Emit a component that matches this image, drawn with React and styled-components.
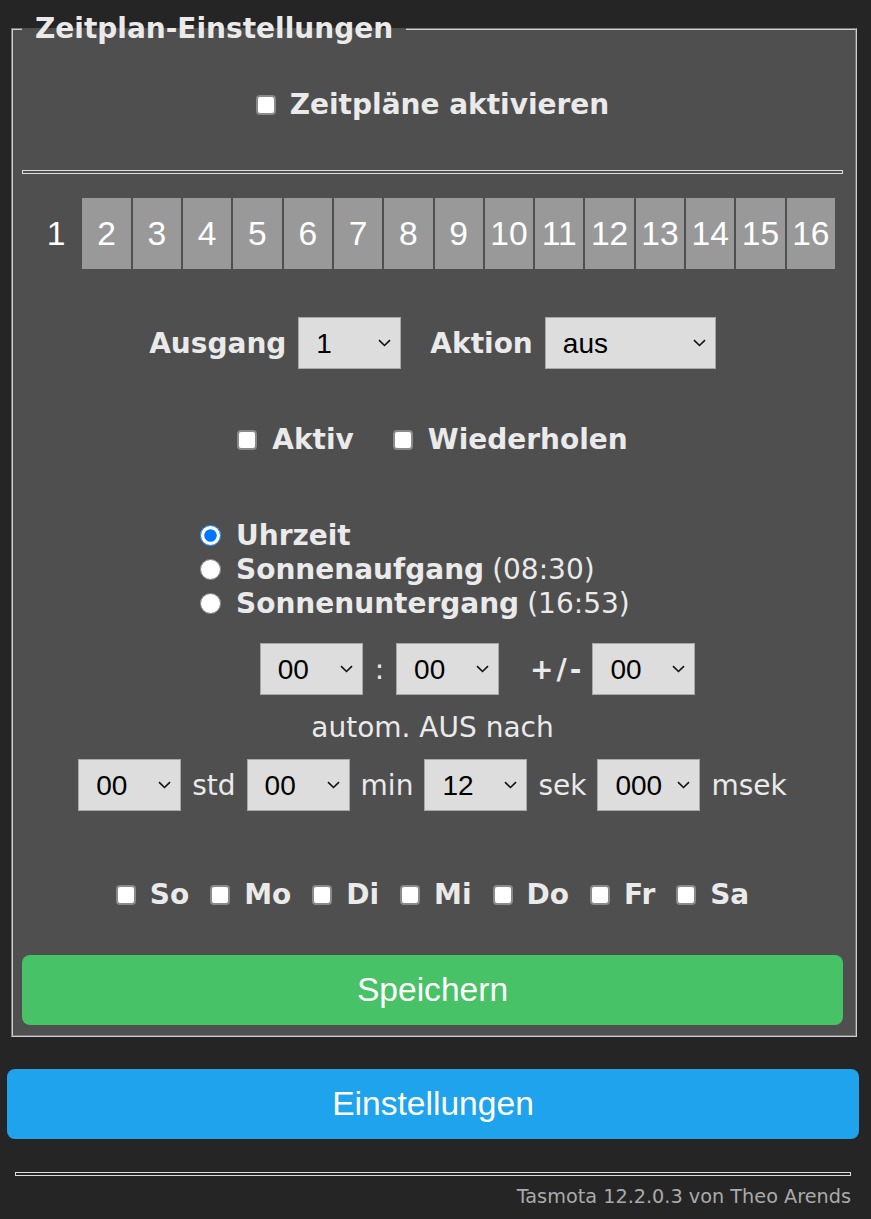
import styled, { createGlobalStyle } from 'styled-components';

const GlobalStyle = createGlobalStyle`
  body {
    margin: 0;
    background: #252525;
    color: #eaeaea;
    font-family: "DejaVu Sans", Verdana, sans-serif;
    font-size: 28px;
  }
`;

const Page = styled.div`
  padding: 0 12px 20px 7px;
`;

const Panel = styled.fieldset`
  margin: 12px 2px 0 4px;
  padding: 0 12px 10px 9px;
  background: #4f4f4f;
  border: 2px groove #cfcfcf;
  min-width: 0;
`;

const Legend = styled.legend`
  padding: 0 13px;
  font-weight: bold;
  line-height: 33px;
`;

const Row = styled.div`
  display: flex;
  align-items: center;
  justify-content: center;
  margin-top: ${(p) => p.$top}px;
  min-height: 34px;
`;

const CheckLabel = styled.label`
  display: flex;
  align-items: center;
  gap: ${(p) => p.$gap || 15}px;
  font-weight: bold;
  line-height: 34px;
`;

const Check = styled.input.attrs({ type: 'checkbox' })`
  appearance: none;
  box-sizing: border-box;
  width: 20px;
  height: 20px;
  margin: 0;
  background: #fff;
  border: 2px solid #8a8a8a;
  border-radius: 4px;
`;

const Divider = styled.hr`
  margin: ${(p) => p.$top}px ${(p) => p.$side || 0}px 0;
  height: 2px;
  border: 1px solid #dcdcdc;
  background: transparent;
`;

const Tabs = styled.div`
  display: grid;
  grid-template-columns: repeat(16, 1fr);
  gap: 2px;
  margin: 24px 8px 0 10px;
  height: 71px;
`;

const Tab = styled.button`
  border: 0;
  border-radius: 0;
  padding: 0;
  background: ${(p) => (p.$active ? 'transparent' : '#999999')};
  color: #fff;
  font-family: "Liberation Sans", Arial, sans-serif;
  font-size: 33.6px;
`;

const Group = styled.div`
  display: flex;
  align-items: center;
  gap: 12px;
`;

const Bold = styled.span`
  font-weight: bold;
`;

const SelectBox = styled.div`
  position: relative;
  display: flex;
  width: ${(p) => p.$w || 103}px;
  height: 52px;
`;

const SelectInput = styled.select`
  appearance: none;
  flex: 1;
  min-width: 0;
  padding: 0 0 0 17px;
  background: #dddddd;
  color: #000;
  border: 1px solid #a8a8a8;
  border-radius: 0;
  font-family: "Liberation Sans", Arial, sans-serif;
  font-size: 28px;
`;

const Chevron = styled.svg`
  position: absolute;
  right: 10px;
  top: 22px;
  width: 13px;
  height: 8px;
  pointer-events: none;
`;

const Select = ({ w, value }) => (
  <SelectBox $w={w}>
    <SelectInput defaultValue={value}>
      <option>{value}</option>
    </SelectInput>
    <Chevron viewBox="0 0 13 8">
      <path d="M1 1.2 L6.5 6.5 L12 1.2" fill="none" stroke="#111" strokeWidth="1.6" />
    </Chevron>
  </SelectBox>
);

const RadioGroup = styled.div`
  margin: 61px 0 0 178px;
`;

const RadioLine = styled.label`
  display: flex;
  align-items: center;
  height: 34px;
  white-space: nowrap;
`;

const Radio = styled.input.attrs({ type: 'radio', name: 'mode' })`
  width: 21px;
  height: 21px;
  margin: 0 15px 0 0;
`;

const Muted = styled.span`
  font-weight: normal;
  margin-left: 8px;
`;

const TimeRow = styled(Row)`
  padding-left: 90px;
`;

const Colon = styled.span`
  margin: 0 12px;
`;

const PlusMinus = styled.span`
  font-weight: bold;
  letter-spacing: 3px;
  margin: 0 8px 0 31px;
`;

const Caption = styled.div`
  margin-top: 16px;
  line-height: 34px;
  text-align: center;
`;

const Days = styled(Row)`
  gap: 21px;
`;

const Button = styled.button`
  display: block;
  width: 100%;
  height: 70px;
  margin-top: ${(p) => p.$top}px;
  border: 0;
  border-radius: 8px;
  background: ${(p) => p.$bg};
  color: #fff;
  font-family: "Liberation Sans", Arial, sans-serif;
  font-size: 33.6px;
`;

const Footer = styled.div`
  margin-top: 10px;
  padding-right: 8px;
  text-align: right;
  font-size: 19.25px;
  line-height: 22px;
  color: #aaaaaa;
`;

const tabs = Array.from({ length: 16 }, (_, i) => i + 1);
const days = ['So', 'Mo', 'Di', 'Mi', 'Do', 'Fr', 'Sa'];

export default function App() {
  return (
    <Page>
      <GlobalStyle />
      <Panel>
        <Legend>Zeitplan-Einstellungen</Legend>

        <Row $top={43}>
          <CheckLabel $gap={14}>
            <Check />
            Zeitpläne aktivieren
          </CheckLabel>
        </Row>

        <Divider $top={48} />

        <Tabs>
          {tabs.map((n) => (
            <Tab key={n} $active={n === 1}>
              {n}
            </Tab>
          ))}
        </Tabs>

        <Row $top={48} style={{ gap: 29 }}>
          <Group>
            <Bold>Ausgang</Bold>
            <Select value="1" />
          </Group>
          <Group>
            <Bold>Aktion</Bold>
            <Select w={171} value="aus" />
          </Group>
        </Row>

        <Row $top={54} style={{ gap: 39 }}>
          <CheckLabel>
            <Check />
            Aktiv
          </CheckLabel>
          <CheckLabel>
            <Check />
            Wiederholen
          </CheckLabel>
        </Row>

        <RadioGroup>
          <RadioLine>
            <Radio defaultChecked />
            <Bold>Uhrzeit</Bold>
          </RadioLine>
          <RadioLine>
            <Radio />
            <Bold>Sonnenaufgang</Bold>
            <Muted>(08:30)</Muted>
          </RadioLine>
          <RadioLine>
            <Radio />
            <Bold>Sonnenuntergang</Bold>
            <Muted>(16:53)</Muted>
          </RadioLine>
        </RadioGroup>

        <TimeRow $top={23}>
          <Select value="00" />
          <Colon>:</Colon>
          <Select value="00" />
          <PlusMinus>+/-</PlusMinus>
          <Select value="00" />
        </TimeRow>

        <Caption>autom. AUS nach</Caption>

        <Row $top={14} style={{ gap: 11 }}>
          <Select value="00" />
          <span>std</span>
          <Select value="00" />
          <span>min</span>
          <Select value="12" />
          <span>sek</span>
          <Select value="000" />
          <span>msek</span>
        </Row>

        <Days $top={67}>
          {days.map((d) => (
            <CheckLabel key={d} $gap={14}>
              <Check />
              {d}
            </CheckLabel>
          ))}
        </Days>

        <Button $top={43} $bg="#47c266">
          Speichern
        </Button>
      </Panel>

      <Button $top={32} $bg="#1fa3ec">
        Einstellungen
      </Button>

      <Divider $top={33} $side={8} />
      <Footer>Tasmota 12.2.0.3 von Theo Arends</Footer>
    </Page>
  );
}
